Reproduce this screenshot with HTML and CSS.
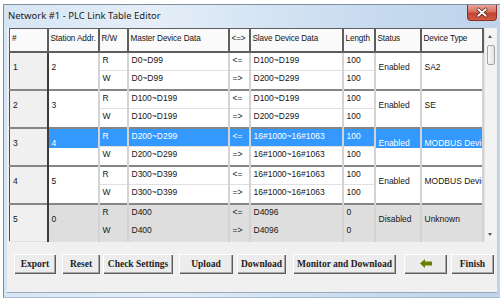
FILE: index.html
```html
<!DOCTYPE html>
<html lang="en">
<head>
<meta charset="utf-8">
<title>PLC Link Table Editor</title>
<link rel="stylesheet" href="styles.css">
</head>
<body>
<div class="window">
  <div class="titlebar">
    <span class="title">Network #1 - PLC Link Table Editor</span>
    <span class="close">
      <svg width="30" height="15" viewBox="0 0 30 15"><path d="M11 4 L19 11 M19 4 L11 11" stroke="#5a1a14" stroke-width="3.6" stroke-linecap="round"/><path d="M11 4 L19 11 M19 4 L11 11" stroke="#fff" stroke-width="2" stroke-linecap="round"/></svg>
    </span>
  </div>
  <div class="client">
    <div class="grid">
      <table class="links">
        <colgroup>
          <col class="c-idx"><col class="c-st"><col class="c-rw"><col class="c-master"><col class="c-dir"><col class="c-slave"><col class="c-len"><col class="c-status"><col class="c-type">
        </colgroup>
        <thead>
          <tr><th>#</th><th>Station Addr.</th><th>R/W</th><th>Master Device Data</th><th>&lt;=&gt;</th><th>Slave Device Data</th><th>Length</th><th>Status</th><th>Device Type</th></tr>
        </thead>
        <tbody>
          <tr class="start">
            <td class="idx merged" rowspan="2">1</td><td class="merged" rowspan="2">2</td>
            <td>R</td><td>D0~D99</td><td>&lt;=</td><td>D100~D199</td><td>100</td>
            <td class="merged" rowspan="2">Enabled</td><td class="merged" rowspan="2">SA2</td>
          </tr>
          <tr><td>W</td><td>D0~D99</td><td>=&gt;</td><td>D200~D299</td><td>100</td></tr>
          <tr class="start">
            <td class="idx merged" rowspan="2">2</td><td class="merged" rowspan="2">3</td>
            <td>R</td><td>D100~D199</td><td>&lt;=</td><td>D100~D199</td><td>100</td>
            <td class="merged" rowspan="2">Enabled</td><td class="merged" rowspan="2">SE</td>
          </tr>
          <tr><td>W</td><td>D100~D199</td><td>=&gt;</td><td>D200~D299</td><td>100</td></tr>
          <tr class="start sel">
            <td class="idx merged" rowspan="2">3</td><td class="merged half" rowspan="2">4</td>
            <td class="hl">R</td><td class="hl">D200~D299</td><td class="hl">&lt;=</td><td class="hl">16#1000~16#1063</td><td class="hl">100</td>
            <td class="merged half" rowspan="2">Enabled</td><td class="merged half" rowspan="2">MODBUS Device</td>
          </tr>
          <tr><td>W</td><td>D200~D299</td><td>=&gt;</td><td>16#1000~16#1063</td><td>100</td></tr>
          <tr class="start">
            <td class="idx merged" rowspan="2">4</td><td class="merged" rowspan="2">5</td>
            <td>R</td><td>D300~D399</td><td>&lt;=</td><td>16#1000~16#1063</td><td>100</td>
            <td class="merged" rowspan="2">Enabled</td><td class="merged" rowspan="2">MODBUS Device</td>
          </tr>
          <tr><td>W</td><td>D300~D399</td><td>=&gt;</td><td>16#1000~16#1063</td><td>100</td></tr>
          <tr class="start off">
            <td class="idx merged" rowspan="2">5</td><td class="merged" rowspan="2">0</td>
            <td>R</td><td>D400</td><td>&lt;=</td><td>D4096</td><td>0</td>
            <td class="merged" rowspan="2">Disabled</td><td class="merged" rowspan="2">Unknown</td>
          </tr>
          <tr class="off"><td>W</td><td>D400</td><td>=&gt;</td><td>D4096</td><td>0</td></tr>
        </tbody>
      </table>
      <div class="scrollbar">
        <div class="sb-btn"><span class="tri-up"></span></div>
        <div class="sb-thumb"></div>
        <div class="sb-btn sb-bottom"><span class="tri-down"></span></div>
      </div>
    </div>
    <div class="actions">
      <button class="btn b-export">Export</button>
      <button class="btn b-reset">Reset</button>
      <button class="btn b-check">Check Settings</button>
      <button class="btn b-upload">Upload</button>
      <button class="btn b-download">Download</button>
      <button class="btn b-monitor">Monitor and Download</button>
      <button class="btn b-back" aria-label="Back"><svg width="12" height="9" viewBox="0 0 12 9"><path d="M0 4.5 L5 0 V2.5 H12 V6.5 H5 V9 Z" fill="#6e7d00"/></svg></button>
      <button class="btn b-finish">Finish</button>
    </div>
  </div>
</div>
</body>
</html>
```
FILE: styles.css
```css
* { box-sizing: border-box; }
html, body { margin: 0; padding: 0; }
body {
  width: 500px;
  height: 302px;
  overflow: hidden;
  background: #ffffff;
  font-family: "Liberation Sans", Arial, sans-serif;
}

.window {
  margin: 4px 0 0 3px;
  width: 498px;
  border: 1px solid #7d8ea3;
  border-bottom-color: #a9bdd2;
  padding: 0 3px 4px 3px;
  background: linear-gradient(to right, #d6e5f4 0%, #e5eef8 30%, #d3e3f3 55%, #c4d8ee 80%, #bfd4eb 100%);
}

.titlebar {
  height: 23px;
  display: flex;
  justify-content: space-between;
  align-items: flex-start;
}
.title {
  font-family: "Noto Sans", "Open Sans", sans-serif;
  font-size: 9.5px;
  line-height: 22px;
  color: #1b1b1b;
  padding-left: 1px;
}
.close {
  width: 30px;
  height: 16px;
  display: flex;
  align-items: center;
  justify-content: center;
  border: 1px solid #8c3027;
  border-top: none;
  border-radius: 0 0 4px 4px;
  background: linear-gradient(#e8a597 0%, #d66f5f 45%, #c24432 55%, #d35a45 100%);
}

.client {
  background: #f0f0f0;
  padding: 0 1px 18px 2px;
  border-bottom: 1px solid #9aa9b8;
}

.grid {
  display: flex;
  height: 213px;
}

.links {
  width: 473px;
  height: 213px;
  border-collapse: collapse;
  table-layout: fixed;
  font-size: 8.5px;
  color: #151515;
  background: #ffffff;
}
.c-idx { width: 38px; }
.c-st { width: 51px; }
.c-rw { width: 29px; }
.c-master { width: 101px; }
.c-dir { width: 21px; }
.c-slave { width: 93px; }
.c-len { width: 32px; }
.c-status { width: 46px; }
.c-type { width: 62px; }

.links th {
  height: 23px;
  padding: 0 1px 2px 2px;
  text-align: left;
  font-weight: normal;
  font-size: 8.2px;
  letter-spacing: -0.1px;
  background: #fafafa;
  border: 1px solid #5e5e5e;
  border-right-width: 2px;
  border-bottom-width: 2px;
  white-space: nowrap;
  overflow: hidden;
}
.links td {
  height: 19px;
  padding: 2px 3px 0;
  vertical-align: top;
  border-right: 2px solid #d3d3d3;
  border-bottom: 1px solid #e0e0e0;
  white-space: nowrap;
  overflow: hidden;
}
.links tr.start td { border-top: 2px solid #858585; }
.links td.merged {
  vertical-align: middle;
  padding-bottom: 8px;
  padding-top: 0;
}
.links td.idx {
  background: #f0f0f0;
  border-left: 1px solid #505050;
  border-right: 2px solid #3c3c3c;
}
.links td.hl {
  background: #3399ff;
  color: #ffffff;
}
.links td.half {
  background: linear-gradient(#3399ff 0, #3399ff 19px, #ffffff 19px);
  color: #ffffff;
}
.links tr.off td { background: #dedede; }
.links tr.off td.idx { background: #f0f0f0; }

.scrollbar {
  width: 14px;
  height: 213px;
  background: #f3f3f3;
  border-left: 1px solid #e2e2e2;
  display: flex;
  flex-direction: column;
}
.sb-btn {
  height: 16px;
  display: flex;
  align-items: center;
  justify-content: center;
}
.sb-bottom { margin-top: auto; height: 14px; }
.tri-up {
  width: 0; height: 0;
  border-left: 2.5px solid transparent;
  border-right: 2.5px solid transparent;
  border-bottom: 3px solid #555;
}
.tri-down {
  width: 0; height: 0;
  border-left: 2.5px solid transparent;
  border-right: 2.5px solid transparent;
  border-top: 3px solid #555;
}
.sb-thumb {
  margin: 1px 1px 0 2px;
  height: 20px;
  border: 1px solid #a3a3a3;
  border-radius: 2px;
  background: linear-gradient(to right, #f7f7f7, #e4e4e4);
}

.actions {
  display: flex;
  margin-top: 13px;
  padding-left: 5px;
}
.btn {
  height: 20px;
  padding: 0 0 1px;
  border: none;
  background: #ececec;
  box-shadow: inset 1px 1px #ffffff, inset -1px -1px #5c5c5c, inset -2px -2px #a8a8a8;
  font-family: "Liberation Serif", "Times New Roman", serif;
  font-weight: bold;
  font-size: 9.5px;
  color: #1c1c1c;
  display: flex;
  align-items: center;
  justify-content: center;
}
.b-export { width: 42px; }
.b-reset { width: 38px; margin-left: 6px; }
.b-check { width: 70px; margin-left: 3px; }
.b-upload { width: 54px; margin-left: 6px; }
.b-download { width: 49px; margin-left: 4px; }
.b-monitor { width: 103px; margin-left: 7px; }
.b-back { width: 43px; margin-left: 8px; }
.b-finish { width: 43px; margin-left: 4px; }
```
